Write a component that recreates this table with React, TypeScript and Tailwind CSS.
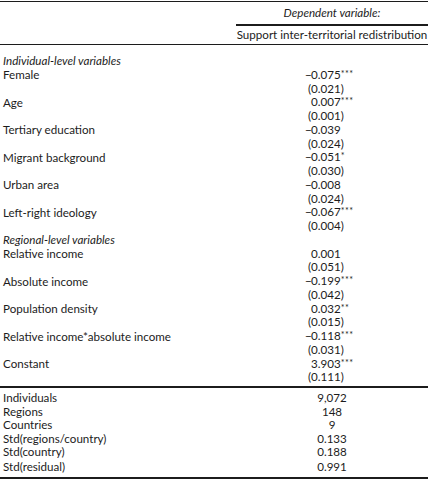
import React from "react";

type Row =
  | { kind: "head"; label: string }
  | { kind: "coef"; label: string; value: string; neg: boolean; stars: string; se: string };

const rows: Row[] = [
  { kind: "head", label: "Individual-level variables" },
  { kind: "coef", label: "Female", value: "0.075", neg: true, stars: "***", se: "(0.021)" },
  { kind: "coef", label: "Age", value: "0.007", neg: false, stars: "***", se: "(0.001)" },
  { kind: "coef", label: "Tertiary education", value: "0.039", neg: true, stars: "", se: "(0.024)" },
  { kind: "coef", label: "Migrant background", value: "0.051", neg: true, stars: "*", se: "(0.030)" },
  { kind: "coef", label: "Urban area", value: "0.008", neg: true, stars: "", se: "(0.024)" },
  { kind: "coef", label: "Left-right ideology", value: "0.067", neg: true, stars: "***", se: "(0.004)" },
  { kind: "head", label: "Regional-level variables" },
  { kind: "coef", label: "Relative income", value: "0.001", neg: false, stars: "", se: "(0.051)" },
  { kind: "coef", label: "Absolute income", value: "0.199", neg: true, stars: "***", se: "(0.042)" },
  { kind: "coef", label: "Population density", value: "0.032", neg: false, stars: "**", se: "(0.015)" },
  { kind: "coef", label: "Relative income*absolute income", value: "0.118", neg: true, stars: "***", se: "(0.031)" },
  { kind: "coef", label: "Constant", value: "3.903", neg: false, stars: "***", se: "(0.111)" },
];

const stats: [string, string][] = [
  ["Individuals", "9,072"],
  ["Regions", "148"],
  ["Countries", "9"],
  ["Std(regions/country)", "0.133"],
  ["Std(country)", "0.188"],
];

function Line({ label, children, italic }: { label: string; children?: React.ReactNode; italic?: boolean }) {
  return (
    <div className="grid grid-cols-[305px_1fr] h-[13.75px] leading-[13.75px] items-center">
      <div className={"pl-[3px] whitespace-nowrap " + (italic ? "italic" : "")}>{label}</div>
      <div className="whitespace-nowrap">{children}</div>
    </div>
  );
}

export default function App() {
  return (
    <div
      className="w-[428px] h-[480px] bg-white text-[#1c1c1c] text-[11.6px] overflow-hidden"
      style={{ fontFamily: "Lato, 'Open Sans', sans-serif" }}
    >
      <div className="h-[1px]" />
      <div className="h-[1px] bg-[#1c1c1c]" />
      {/* header */}
      <div className="grid grid-cols-[236px_1fr]">
        <div />
        <div className="flex flex-col">
          <div className="h-[22px] flex items-center justify-center italic">Dependent variable:</div>
          <div className="h-[2px] bg-[#1c1c1c]" />
          <div className="h-[17px] flex items-center justify-center whitespace-nowrap">
            Support inter-territorial redistribution
          </div>
        </div>
      </div>
      <div className="h-[1px]" />
      <div className="h-[1px] bg-[#1c1c1c]" />
      {/* body */}
      <div className="pt-[9px] pb-[2px]">
        {rows.map((r, i) =>
          r.kind === "head" ? (
            <Line key={i} label={r.label} italic />
          ) : (
            <React.Fragment key={i}>
              <Line label={r.label}>
                <span className="inline-block w-[6px]">{r.neg ? "−" : ""}</span>
                {r.value}
                {r.stars && <span className="text-[9px] relative top-[-2px] tracking-[0.5px]">{r.stars}</span>}
              </Line>
              <Line label="">
                <span className="inline-block w-[3px]" />
                {r.se}
              </Line>
            </React.Fragment>
          )
        )}
      </div>
      <div className="h-[2px] bg-[#1c1c1c]" />
      <div className="pt-[3px] pb-[2px]">
        {stats.map(([l, v], i) => (
          <div key={i} className="grid grid-cols-[236px_1fr] h-[13.5px] leading-[13.5px] items-center">
            <div className="pl-[3px] whitespace-nowrap">{l}</div>
            <div className="text-center">{v}</div>
          </div>
        ))}
        <div className="grid grid-cols-[236px_1fr] h-[16px] leading-[16px] items-end">
          <div className="pl-[3px] whitespace-nowrap">Std(residual)</div>
          <div className="text-center">0.991</div>
        </div>
      </div>
      <div className="h-[2px] bg-[#1c1c1c]" />
    </div>
  );
}
